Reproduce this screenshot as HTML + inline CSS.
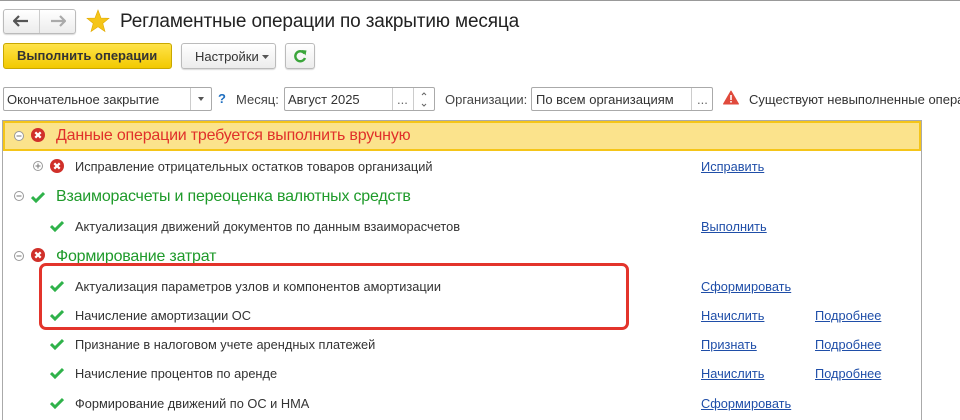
<!DOCTYPE html>
<html><head><meta charset="utf-8"><style>
*{box-sizing:border-box;margin:0;padding:0}
body{width:960px;height:416px;overflow:hidden;background:#fff;font-family:"Liberation Sans",Arial,sans-serif;font-size:13px;color:#333;position:relative}
.a{position:absolute;white-space:nowrap}
.btn{position:absolute;border:1px solid #bbb;border-radius:3px;background:linear-gradient(#fff,#ececec);box-shadow:0 1px 1px rgba(0,0,0,.15)}
.inp{position:absolute;border:1px solid #aaa;border-radius:2px;background:#fff}
.lnk{position:absolute;color:#1f4ea8;text-decoration:underline;font-size:12.8px}
.row{position:absolute;left:75px;font-size:12.8px;color:#333}
.g{font-size:16px;letter-spacing:-0.2px}
</style></head><body>
<div class="a" style="left:0;top:0;width:960px;height:1px;background:#999"></div>
<div class="btn" style="left:3px;top:9px;width:73px;height:25px"></div>
<div class="a" style="left:39px;top:10px;width:1px;height:23px;background:#ccc"></div>
<svg class="a" style="left:13px;top:15px" width="16" height="12"><path d="M1 6H15M6 1L1 6L6 11" stroke="#555" stroke-width="2.2" fill="none"/></svg>
<svg class="a" style="left:50px;top:15px" width="16" height="12"><path d="M1 6H15M10 1L15 6L10 11" stroke="#aaa" stroke-width="2.2" fill="none"/></svg>
<svg class="a" style="left:86px;top:9px" width="24" height="24"><path d="M12 1L15 9L23 9.3L16.8 14.4L19 22.5L12 17.8L5 22.5L7.2 14.4L1 9.3L9 9Z" fill="#f5c518" stroke="#e0a800" stroke-width=".6"/></svg>
<div class="a" style="left:120px;top:11px;font-size:19px;color:#222;letter-spacing:-0.15px">Регламентные операции по закрытию месяца</div>
<div class="a" style="left:3px;top:43px;width:169px;height:26px;border:1px solid #c9a800;border-radius:3px;background:linear-gradient(#ffe34a,#f2c900)"></div>
<div class="a" style="left:17px;top:48px;font-weight:bold;font-size:13px;color:#333">Выполнить операции</div>
<div class="btn" style="left:181px;top:43px;width:95px;height:26px"></div>
<div class="a" style="left:195px;top:49px;color:#333">Настройки</div>
<svg class="a" style="left:262px;top:55px" width="7" height="4"><path d="M0 0H7L3.5 4Z" fill="#555"/></svg>
<div class="btn" style="left:285px;top:43px;width:30px;height:26px"></div>
<svg class="a" style="left:292px;top:48px" width="16" height="16"><path d="M12.5 5.5A5 5 0 1 0 13 10" stroke="#3aa53a" stroke-width="2.4" fill="none"/><path d="M9.5 2L14.5 2.5L13.5 7.5Z" fill="#3aa53a"/></svg>
<div class="inp" style="left:3px;top:87px;width:209px;height:24px"></div>
<div class="a" style="left:190px;top:88px;width:1px;height:22px;background:#ccc"></div>
<div class="a" style="left:7px;top:92px">Окончательное закрытие</div>
<svg class="a" style="left:198px;top:97px" width="6" height="4"><path d="M0 0H6L3 4Z" fill="#555"/></svg>
<div class="a" style="left:218px;top:91px;color:#1f6fc0;font-weight:bold">?</div>
<div class="a" style="left:236px;top:92px;color:#444">Месяц:</div>
<div class="inp" style="left:284px;top:87px;width:151px;height:24px"></div>
<div class="a" style="left:392px;top:88px;width:1px;height:22px;background:#ccc"></div>
<div class="a" style="left:413px;top:88px;width:1px;height:22px;background:#ccc"></div>
<div class="a" style="left:288px;top:92px">Август 2025</div>
<div class="a" style="left:397px;top:92px;color:#666">...</div>
<svg class="a" style="left:420px;top:91px" width="8" height="17"><path d="M2 4L4 2L6 4M2 13L4 15L6 13" stroke="#666" fill="none"/></svg>
<div class="a" style="left:445px;top:92px;color:#444">Организации:</div>
<div class="inp" style="left:531px;top:87px;width:182px;height:24px"></div>
<div class="a" style="left:691px;top:88px;width:1px;height:22px;background:#ccc"></div>
<div class="a" style="left:536px;top:92px">По всем организациям</div>
<div class="a" style="left:697px;top:92px;color:#666">...</div>
<svg class="a" style="left:723px;top:90px" width="16" height="15"><path d="M8 1L15.5 14H0.5Z" fill="#e04a3c" stroke="#e04a3c" stroke-linejoin="round"/><rect x="7.2" y="5" width="1.6" height="5" fill="#fff"/><rect x="7.2" y="11" width="1.6" height="1.6" fill="#fff"/></svg>
<div class="a" style="left:749px;top:92px;color:#333">Существуют невыполненные операции</div>
<div class="a" style="left:2px;top:120px;width:920px;height:300px;border:1px solid #aaa;border-bottom:none"></div>
<div class="a" style="left:3px;top:121px;width:918px;height:30px;background:#fbe38c;border:2px solid #f5c518"></div>
<svg width="0" height="0" style="position:absolute"><defs>
<g id="x"><circle cx="7" cy="7" r="7" fill="#d0302a"/><path d="M4.3 4.3L9.7 9.7M9.7 4.3L4.3 9.7" stroke="#fff" stroke-width="2.2"/></g>
<g id="c"><path d="M1 7L5 11L13 3" stroke="#2fb24a" stroke-width="3" fill="none"/></g>
<g id="m"><circle cx="5" cy="5" r="4.5" fill="#fff" stroke="#999"/><path d="M2.5 5H7.5" stroke="#777"/></g>
<g id="p"><circle cx="5" cy="5" r="4.5" fill="#fff" stroke="#999"/><path d="M2.5 5H7.5M5 2.5V7.5" stroke="#777"/></g>
</defs></svg>
<svg class="a" style="left:14px;top:131px" width="11" height="11"><use href="#m"/></svg>
<svg class="a" style="left:31px;top:128px" width="14" height="14"><use href="#x"/></svg>
<div class="a g" style="left:56px;top:127px;color:#e0302a">Данные операции требуется выполнить вручную</div>
<svg class="a" style="left:33px;top:161px" width="11" height="11"><use href="#p"/></svg>
<svg class="a" style="left:50px;top:159px" width="14" height="14"><use href="#x"/></svg>
<div class="row" style="top:159px">Исправление отрицательных остатков товаров организаций</div>
<div class="lnk" style="left:701px;top:159px">Исправить</div>
<svg class="a" style="left:14px;top:191px" width="11" height="11"><use href="#m"/></svg>
<svg class="a" style="left:31px;top:190px" width="14" height="14"><use href="#c"/></svg>
<div class="a g" style="left:56px;top:188px;color:#1e9a2a">Взаиморасчеты и переоценка валютных средств</div>
<svg class="a" style="left:50px;top:219px" width="14" height="14"><use href="#c"/></svg>
<div class="row" style="top:219px">Актуализация движений документов по данным взаиморасчетов</div>
<div class="lnk" style="left:701px;top:219px">Выполнить</div>
<svg class="a" style="left:14px;top:251px" width="11" height="11"><use href="#m"/></svg>
<svg class="a" style="left:31px;top:248px" width="14" height="14"><use href="#x"/></svg>
<div class="a g" style="left:56px;top:248px;color:#1e9a2a">Формирование затрат</div>
<svg class="a" style="left:50px;top:279px" width="14" height="14"><use href="#c"/></svg>
<div class="row" style="top:279px">Актуализация параметров узлов и компонентов амортизации</div>
<div class="lnk" style="left:701px;top:279px">Сформировать</div>
<svg class="a" style="left:50px;top:308px" width="14" height="14"><use href="#c"/></svg>
<div class="row" style="top:308px">Начисление амортизации ОС</div>
<div class="lnk" style="left:701px;top:308px">Начислить</div>
<div class="lnk" style="left:815px;top:308px">Подробнее</div>
<svg class="a" style="left:50px;top:337px" width="14" height="14"><use href="#c"/></svg>
<div class="row" style="top:337px">Признание в налоговом учете арендных платежей</div>
<div class="lnk" style="left:701px;top:337px">Признать</div>
<div class="lnk" style="left:815px;top:337px">Подробнее</div>
<svg class="a" style="left:50px;top:366px" width="14" height="14"><use href="#c"/></svg>
<div class="row" style="top:366px">Начисление процентов по аренде</div>
<div class="lnk" style="left:701px;top:366px">Начислить</div>
<div class="lnk" style="left:815px;top:366px">Подробнее</div>
<svg class="a" style="left:50px;top:396px" width="14" height="14"><use href="#c"/></svg>
<div class="row" style="top:396px">Формирование движений по ОС и НМА</div>
<div class="lnk" style="left:701px;top:396px">Сформировать</div>
<div class="a" style="left:39px;top:263px;width:590px;height:67px;border:3px solid #e3342b;border-radius:7px"></div>
</body></html>
